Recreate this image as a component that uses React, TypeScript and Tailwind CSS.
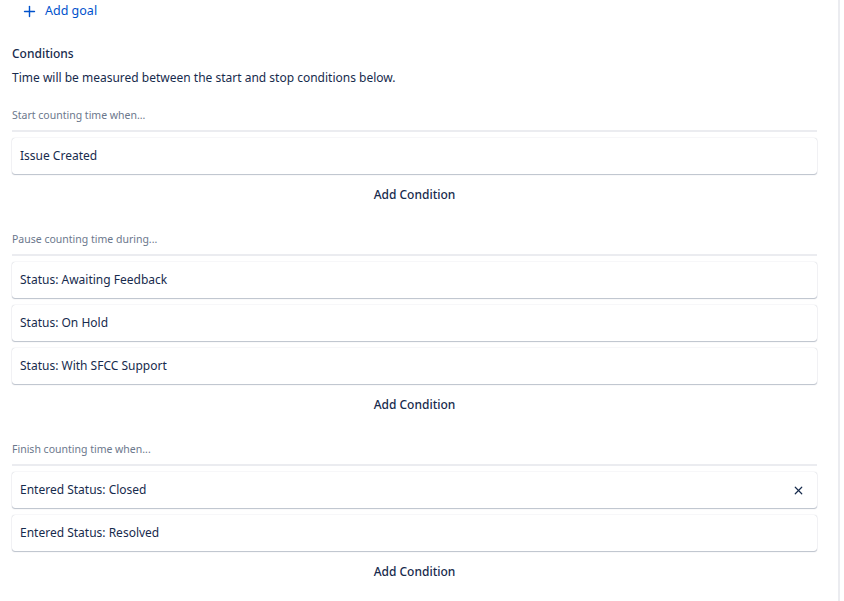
import React from "react";
import { Plus, X } from "lucide-react";

type Section = {
  label: string;
  items: { text: string; removable?: boolean }[];
};

const SECTIONS: Section[] = [
  { label: "Start counting time when...", items: [{ text: "Issue Created" }] },
  {
    label: "Pause counting time during...",
    items: [
      { text: "Status: Awaiting Feedback" },
      { text: "Status: On Hold" },
      { text: "Status: With SFCC Support" },
    ],
  },
  {
    label: "Finish counting time when...",
    items: [{ text: "Entered Status: Closed", removable: true }, { text: "Entered Status: Resolved" }],
  },
];

function ConditionCard({ text, removable }: { text: string; removable?: boolean }) {
  return (
    <div className="h-[36px] flex items-center justify-between pl-[8px] pr-[12px] bg-white rounded-[3px] shadow-[0_1px_1px_rgba(9,30,66,0.25),0_0_1px_rgba(9,30,66,0.31)] text-[12px] text-[#172b4d]">
      <span>{text}</span>
      {removable && <X className="w-[13px] h-[13px] text-[#172b4d]" strokeWidth={2.2} />}
    </div>
  );
}

export default function App() {
  return (
    <div
      className="w-full h-[601px] bg-white flex overflow-hidden"
      style={{ fontFamily: '"Noto Sans", "Open Sans", sans-serif' }}
    >
      <div className="w-[840px] pl-[12px] pr-[21px] border-r-2 border-[#ebecf0] flex flex-col">
        {/* Add goal */}
        <div className="h-[22px] flex items-center gap-[7px] pl-[9px] text-[#0052cc] text-[12.5px]">
          <Plus className="w-[17px] h-[17px]" strokeWidth={2} />
          <span>Add goal</span>
        </div>

        <div className="mt-[21px] h-[22px] leading-[22px] text-[12px] font-medium text-[#172b4d]">Conditions</div>
        <div className="mt-[2px] h-[22px] leading-[22px] text-[12px] text-[#172b4d]">
          Time will be measured between the start and stop conditions below.
        </div>

        {SECTIONS.map((s, i) => (
          <div key={s.label} className={i === 0 ? "mt-[18px]" : "mt-[20px]"}>
            <div className="h-[16px] leading-[16px] text-[10.5px] text-[#6b778c]">{s.label}</div>
            <div className="mt-[7px] border-b-2 border-[#ebecf0]" />
            <div className="mt-[6px] flex flex-col gap-[7px]">
              {s.items.map((it) => (
                <ConditionCard key={it.text} text={it.text} removable={it.removable} />
              ))}
            </div>
            <div className="mt-[5px] h-[32px] flex items-center justify-center">
              <button className="text-[12px] font-medium text-[#172b4d]">Add Condition</button>
            </div>
          </div>
        ))}
      </div>
    </div>
  );
}
